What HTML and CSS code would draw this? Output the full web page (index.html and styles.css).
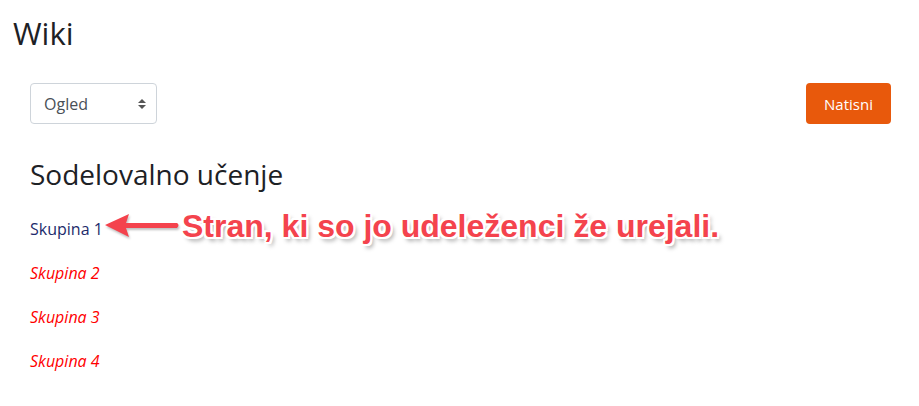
FILE: index.html
```html
<!DOCTYPE html>
<html lang="sl">
<head>
  <meta charset="UTF-8" />
  <title>Wiki</title>
  <link rel="stylesheet" href="styles.css">
</head>
<body>
  <h2 class="page-title">Wiki</h2>

  <div class="wiki-main">
    <div class="toolbar">
      <div class="select-box">
        <span>Ogled</span>
        <svg class="select-arrows" width="8" height="10" viewBox="0 0 8 10">
          <path d="M4 0 L8 4 L0 4 Z" fill="#555" />
          <path d="M0 6 L8 6 L4 10 Z" fill="#555" />
        </svg>
      </div>
      <button class="print-btn">Natisni</button>
    </div>

    <h3 class="wiki-title">Sodelovalno učenje</h3>

    <ul class="group-list">
      <li class="group-row">
        <a href="#" class="group-link">Skupina 1</a>
        <!-- annotation -->
        <div class="note">
          <svg class="note-arrow" width="80" height="30" viewBox="0 0 80 30">
            <path d="M3 14 L27 3 L24 12 L75 12 Q78 14 75 17 L24 17 L27 26 Z" fill="#f4434d" />
          </svg>
          <span class="note-text">Stran, ki so jo udeleženci že urejali.</span>
        </div>
      </li>
      <li class="group-row"><a href="#" class="group-link missing">Skupina 2</a></li>
      <li class="group-row"><a href="#" class="group-link missing">Skupina 3</a></li>
      <li class="group-row"><a href="#" class="group-link missing">Skupina 4</a></li>
    </ul>
  </div>
</body>
</html>
```

FILE: styles.css
```css
body {
  margin: 0;
  padding: 0;
  background: #fff;
  color: #1d2125;
  font-family: 'Open Sans', 'Noto Sans', sans-serif;
  font-size: 15px;
}

.page-title {
  margin: 0;
  padding: 13px 0 0 13px;
  font-size: 31px;
  font-weight: 400;
  line-height: 40px;
}

.wiki-main {
  padding: 30px 28px 0 30px;
}

.toolbar {
  display: flex;
  justify-content: space-between;
  align-items: center;
}

.select-box {
  width: 127px;
  height: 41px;
  box-sizing: border-box;
  border: 1px solid #ced4da;
  border-radius: 4px;
  padding: 0 10px 0 13px;
  display: flex;
  align-items: center;
  justify-content: space-between;
  color: #495057;
  font-size: 16px;
}

.print-btn {
  width: 85px;
  height: 41px;
  background-color: #e8590c;
  border: none;
  border-radius: 4px;
  color: #fff;
  font-family: inherit;
  font-size: 15px;
}

.wiki-title {
  margin: 32px 0 0;
  font-size: 28px;
  font-weight: 400;
  line-height: 36px;
}

.group-list {
  list-style: none;
  margin: 25px 0 0;
  padding: 0;
}

.group-row {
  position: relative;
  height: 44px;
  line-height: 24px;
}

.group-link {
  color: #1d2b6b;
  text-decoration: none;
  font-size: 16px;
}

.group-link.missing {
  color: #f00;
  font-style: italic;
}

.note {
  position: absolute;
  left: 72px;
  top: -6px;
  display: flex;
  align-items: center;
}

.note-arrow {
  filter: drop-shadow(1px 2px 1px rgba(0, 0, 0, 0.25));
}

.note-text {
  margin-left: 0;
  font-family: 'Liberation Sans', Arial, sans-serif;
  font-weight: bold;
  font-size: 32px;
  color: #f4434d;
  text-shadow:
    -2px 0 0 #fff, 2px 0 0 #fff, 0 -2px 0 #fff, 0 2px 0 #fff,
    -2px -2px 0 #fff, 2px 2px 0 #fff, -2px 2px 0 #fff, 2px -2px 0 #fff,
    3px 4px 4px rgba(0, 0, 0, 0.35);
}
```
